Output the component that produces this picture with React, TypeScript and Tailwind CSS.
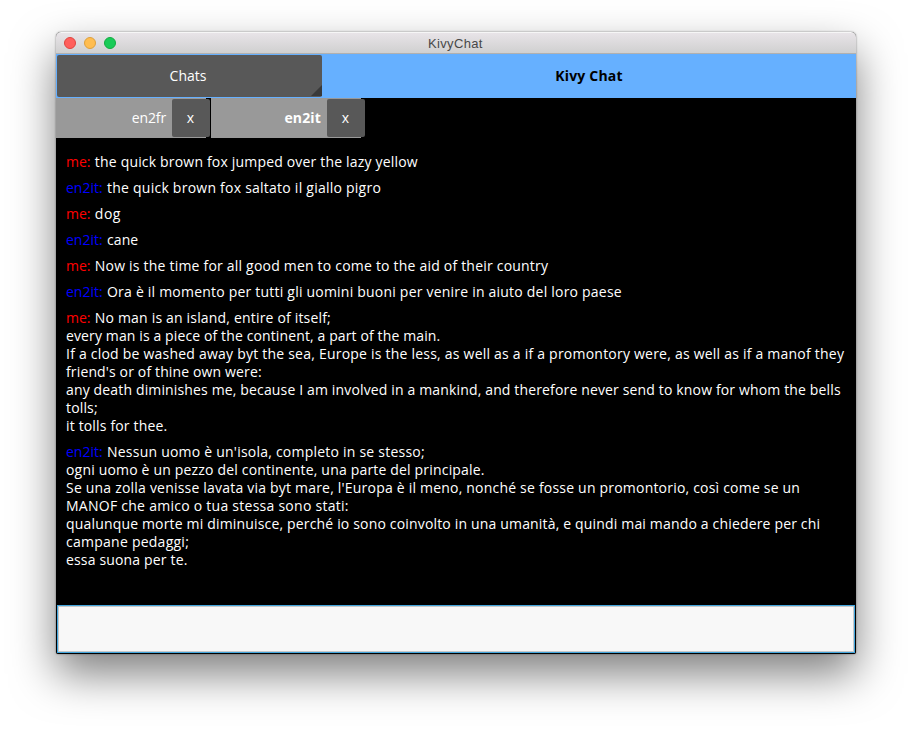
import React from 'react';

type Line = { text: string; tracking: string };
type Message = { from: 'me' | 'en2it'; lines: Line[] };

const messages: Message[] = [
  { from: 'me', lines: [{ text: 'the quick brown fox jumped over the lazy yellow', tracking: 'tracking-[0.18px]' }] },
  { from: 'en2it', lines: [{ text: 'the quick brown fox saltato il giallo pigro', tracking: 'tracking-[0.24px]' }] },
  { from: 'me', lines: [{ text: 'dog', tracking: 'tracking-[0.5px]' }] },
  { from: 'en2it', lines: [{ text: 'cane', tracking: 'tracking-[0.1px]' }] },
  { from: 'me', lines: [{ text: 'Now is the time for all good men to come to the aid of their country', tracking: 'tracking-[0.205px]' }] },
  { from: 'en2it', lines: [{ text: 'Ora è il momento per tutti gli uomini buoni per venire in aiuto del loro paese', tracking: 'tracking-[0.213px]' }] },
  {
    from: 'me',
    lines: [
      { text: 'No man is an island, entire of itself;', tracking: 'tracking-[0.18px]' },
      { text: 'every man is a piece of the continent, a part of the main.', tracking: 'tracking-[0.12px]' },
      { text: 'If a clod be washed away byt the sea, Europe is the less, as well as a if a promontory were, as well as if a manof they', tracking: 'tracking-[0.222px]' },
      { text: "friend's or of thine own were:", tracking: 'tracking-[0.14px]' },
      { text: 'any death diminishes me, because I am involved in a mankind, and therefore never send to know for whom the bells', tracking: 'tracking-[0.148px]' },
      { text: 'tolls;', tracking: 'tracking-[0.15px]' },
      { text: 'it tolls for thee.', tracking: 'tracking-[0.16px]' },
    ],
  },
  {
    from: 'en2it',
    lines: [
      { text: "Nessun uomo è un'isola, completo in se stesso;", tracking: 'tracking-[0.225px]' },
      { text: 'ogni uomo è un pezzo del continente, una parte del principale.', tracking: 'tracking-[0.18px]' },
      { text: "Se una zolla venisse lavata via byt mare, l'Europa è il meno, nonché se fosse un promontorio, così come se un", tracking: 'tracking-[0.204px]' },
      { text: 'MANOF che amico o tua stessa sono stati:', tracking: 'tracking-[0.26px]' },
      { text: 'qualunque morte mi diminuisce, perché io sono coinvolto in una umanità, e quindi mai mando a chiedere per chi', tracking: 'tracking-[0.168px]' },
      { text: 'campane pedaggi;', tracking: 'tracking-[0.25px]' },
      { text: 'essa suona per te.', tracking: 'tracking-[0.16px]' },
    ],
  },
];

function ChatTab({ name, active = false }: { name: string; active?: boolean }) {
  return (
    <div className="flex h-10 w-[154px]">
      <div className={`flex h-10 w-[116px] items-center justify-end bg-[#999] pr-[6px] ${active ? 'font-bold tracking-[0.15px]' : 'tracking-[-0.15px]'}`}>{name}</div>
      <div className="h-10 w-[38px] bg-[linear-gradient(90deg,#999_34px,#000_34px)] py-px">
        <button className="flex h-[38px] w-[38px] items-center justify-center rounded-[2px] bg-[#585858] pr-px">x</button>
      </div>
    </div>
  );
}

export default function App() {
  return (
    <div className="h-[734px] w-[912px] overflow-hidden bg-white px-14 pt-8 font-['Open_Sans',sans-serif] text-[14px] leading-[18px] text-white">
      <div className="flex h-[622px] w-[800px] flex-col rounded-t-[5px] rounded-b-[2px] bg-black shadow-[0_20px_44px_rgba(0,0,0,0.5),0_0_2px_rgba(0,0,0,0.5)]">
        <div className="flex h-[22px] shrink-0 items-center rounded-t-[5px] border-t border-b border-t-[#f6f6f6] border-b-[#b0b0b0] bg-linear-to-b from-[#e8e4e8] to-[#d0d0d0] pl-2">
          <div className="flex w-[364px] gap-2">
            <span className="h-3 w-3 rounded-full border border-[#e0443e] bg-[#ff5f5c]" />
            <span className="h-3 w-3 rounded-full border border-[#dea03c] bg-[#ffbd50]" />
            <span className="h-3 w-3 rounded-full border border-[#12ac40] bg-[#19cb58]" />
          </div>
          <span className="pt-[2px] font-['Liberation_Sans',sans-serif] text-[13px] tracking-[0.35px] text-[#484848]">KivyChat</span>
        </div>
        <div className="flex h-11 shrink-0 bg-[#66b0ff] py-px pl-px">
          <button className="flex h-[42px] w-[265px] items-end justify-end rounded-[2px] bg-[#585858]">
            <span className="flex h-[42px] grow items-center justify-center pl-[8px]">Chats</span>
            <svg className="mb-px h-[11px] w-[11px]" viewBox="0 0 11 11"><path d="M11 0V11H0Z" fill="#393939" /></svg>
          </button>
          <h1 className="flex grow items-center justify-center font-bold tracking-[0.2px] text-black">Kivy Chat</h1>
        </div>
        <div className="flex h-10 shrink-0 gap-px">
          <ChatTab name="en2fr" />
          <ChatTab name="en2it" active />
        </div>
        <div className="flex grow flex-col gap-2 px-[10px] pt-[15px]">
          {messages.map((m, i) => (
            <div key={i}>
              {m.lines.map((l, j) => (
                <p key={j} className="whitespace-nowrap">
                  {j === 0 && <span className={`mr-[0.7px] ${m.from === 'me' ? 'text-[#f00]' : 'text-[#00f]'}`}>{m.from}: </span>}
                  <span className={l.tracking}>{l.text}</span>
                </p>
              ))}
            </div>
          ))}
        </div>
        <div className="mx-px mb-px h-12 shrink-0 border border-[#42a5dc] bg-[#f8f8f8] shadow-[inset_0_0_0_1px_#c8c8c8]" />
      </div>
    </div>
  );
}
